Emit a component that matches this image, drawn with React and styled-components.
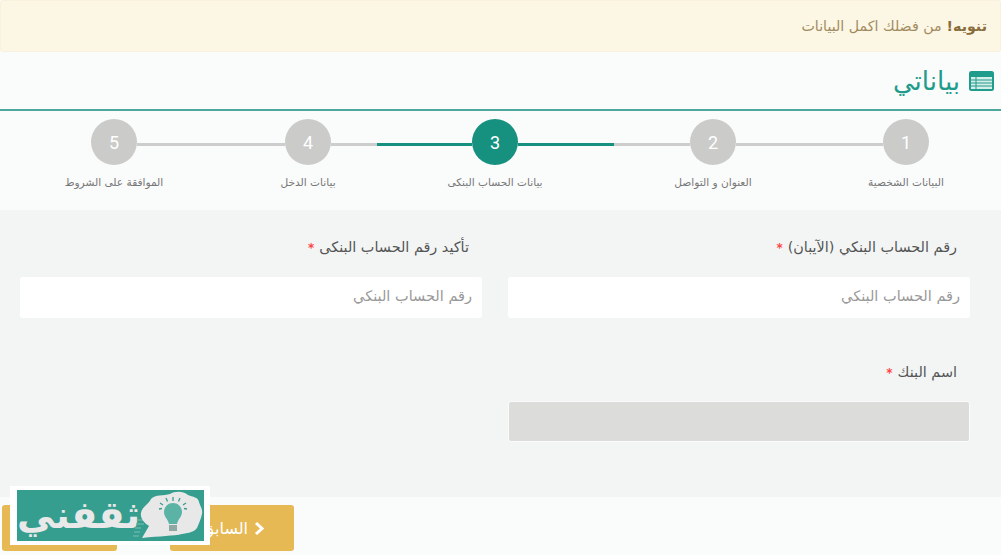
import React from "react"
import styled, { createGlobalStyle } from "styled-components"

const GlobalStyle = createGlobalStyle`
  html, body {
    margin: 0;
    padding: 0;
    background: #fafbfb;
  }
  body {
    font-family: "DejaVu Sans", "Liberation Sans", sans-serif;
  }
`

const Page = styled.div`
  position: relative;
  width: 1001px;
  height: 555px;
  overflow: hidden;
  direction: rtl;
`

const Alert = styled.div`
  box-sizing: border-box;
  height: 52px;
  padding: 0 13px 0 0;
  display: flex;
  align-items: center;
  background: #fbf7e4;
  border: 1px solid #f9f1dc;
  border-radius: 3px;
  color: #a28a5f;
  font-size: 14.2px;

  strong {
    color: #8a6d3b;
    margin-left: 5px;
  }
`

const Header = styled.div`
  box-sizing: border-box;
  height: 59px;
  padding: 0 7px 0 0;
  display: flex;
  align-items: center;
  gap: 9px;
  background: #fafbfb;
  border-bottom: 2px solid #4ea79c;
`

const Title = styled.h1`
  margin: 0;
  font-size: 26px;
  font-weight: normal;
  color: #1f9c8b;
`

const Stepper = styled.div`
  box-sizing: border-box;
  height: 99px;
  padding: 8px 72px 0 0;
  display: grid;
  grid-template-columns: 46px 147px 46px 76px 96px 46px 95px 46px 46px 148px 46px;
  grid-template-rows: 46px auto;
  row-gap: 11px;
  align-content: start;
  background: #fafbfb;
`

const Circle = styled.div`
  grid-row: 1;
  grid-column: ${props => props.$col};
  width: 46px;
  height: 46px;
  border-radius: 50%;
  display: flex;
  align-items: center;
  justify-content: center;
  font-family: Roboto, sans-serif;
  font-size: 18px;
  color: #fff;
  background: ${props => (props.$active ? "#17917f" : "#cbcbca")};
`

const Line = styled.div`
  grid-row: 1;
  grid-column: ${props => props.$col};
  align-self: center;
  height: 3px;
  margin-top: 4px;
  background: ${props => (props.$active ? "#17917f" : "#cdcdcd")};
`

const StepLabel = styled.div`
  grid-row: 2;
  grid-column: ${props => props.$col};
  justify-self: center;
  white-space: nowrap;
  font-size: 10.6px;
  color: #777;
`

const FormArea = styled.div`
  box-sizing: border-box;
  height: 287px;
  padding: 28px 31px 0 19px;
  display: grid;
  grid-template-columns: 462px 462px;
  column-gap: 26px;
  grid-auto-rows: 125px;
  background: #f3f5f5;
`

const Field = styled.div`
  display: flex;
  flex-direction: column;
`

const Label = styled.label`
  box-sizing: border-box;
  height: 39px;
  padding: 1px 13px 0 0;
  font-size: 14.4px;
  color: #555;

  span {
    color: #f44;
    margin-right: 5px;
    font-size: 12px;
    font-weight: bold;
  }
`

const Input = styled.input`
  box-sizing: border-box;
  height: 41px;
  padding: 0 10px 3px;
  border: 0;
  border-radius: 3px;
  background: #fff;
  font-family: inherit;
  font-size: 14.5px;
  direction: rtl;

  &::placeholder {
    color: #999;
    opacity: 1;
  }
`

const Select = styled.div`
  box-sizing: border-box;
  height: 41px;
  margin-top: -1px;
  border: 1px solid #fbfbfb;
  border-radius: 3px;
  background: #dcdcdb;
`

const Footer = styled.div`
  height: 58px;
  padding: 8px 0 0 2px;
  box-sizing: border-box;
  display: flex;
  direction: ltr;
  gap: 53px;
  background: #fafbfb;
`

const Button = styled.div`
  box-sizing: border-box;
  width: ${props => props.$width}px;
  height: 46px;
  padding-right: 30px;
  border-radius: 3px;
  background: #e6b955;
  color: #fff;
  font-size: 16px;
  display: flex;
  direction: rtl;
  align-items: center;
  gap: 6px;
`

const Logo = styled.div`
  position: absolute;
  left: 10px;
  top: 486px;
  box-sizing: border-box;
  width: 200px;
  height: 59px;
  border-style: solid;
  border-color: #fff;
  border-width: 4px 6px 4px 7px;
  background: #369e8f;
  display: flex;
  direction: ltr;
  align-items: center;
`

const LogoText = styled.div`
  width: 123px;
  text-align: center;
  font-family: "DejaVu Sans", sans-serif;
  font-weight: bold;
  font-size: 38px;
  line-height: 51px;
  white-space: nowrap;
  color: #e9e9e9;
  direction: rtl;
`

const ListIcon = () => (
  <svg width="25" height="20" viewBox="0 0 25 20">
    <rect width="25" height="20" rx="2.5" fill="#1f9c8b" />
    <rect x="2" y="6" width="21" height="12" fill="#d5eeea" />
    <path d="M2 9h21M2 12h21M2 15h21M7 6v12" stroke="#1f9c8b" strokeWidth="1" />
  </svg>
)

const ChevronIcon = () => (
  <svg width="10" height="15" viewBox="0 0 10 15">
    <path d="M2 2 L8 7.5 L2 13" fill="none" stroke="#fff" strokeWidth="3" />
  </svg>
)

const BubbleIcon = () => (
  <svg width="64" height="51" viewBox="0 0 64 51" style={{ overflow: "visible" }}>
    <path d="M-3 30h7M-4 34h8M-5 38h6M-6 42h6M-7 46h6" stroke="#62b5a8" strokeWidth="1.5" />
    <path
      d="M2 48 L9 36 C4 33 0 28 1 23 C2 17 8 15 11 9 C15 4 24 6 30 4 C35 1 43 1 48 5 C53 7 58 7 59 12 C60 16 63 19 62 24 C61 29 59 33 57 38 C53 43 47 43 42 44 C34 46 20 46 2 48 Z"
      fill="#e8e8e8"
    />
    <path d="M33 13 C27 13 24 18 24 22 C24 27 28 29 29 34 L37 34 C38 29 42 27 42 22 C42 18 39 13 33 13 Z" fill="#5bb3a5" />
    <rect x="29" y="35" width="8" height="6" fill="#8fa8a3" />
    <path d="M33 7v4M26 8l1.5 3.5M40 8l-1.5 3.5M20 13l3 2M46 13l-3 2M19 19l3-.5M47 19l-3-.5" stroke="#369e8f" strokeWidth="1.3" />
  </svg>
)

const App = () => {
  return (
    <Page>
      <GlobalStyle />
      <Alert>
        <strong>تنويه!</strong> من فضلك اكمل البيانات
      </Alert>

      <Header>
        <ListIcon />
        <Title>بياناتي</Title>
      </Header>

      <Stepper>
        <Circle $col={1}>1</Circle>
        <Line $col={2} />
        <Circle $col={3}>2</Circle>
        <Line $col={4} />
        <Line $col={5} $active />
        <Circle $col={6} $active>3</Circle>
        <Line $col={7} $active />
        <Line $col={8} />
        <Circle $col={9}>4</Circle>
        <Line $col={10} />
        <Circle $col={11}>5</Circle>
        <StepLabel $col={1}>البيانات الشخصية</StepLabel>
        <StepLabel $col={3}>العنوان و التواصل</StepLabel>
        <StepLabel $col={6}>بيانات الحساب البنكى</StepLabel>
        <StepLabel $col={9}>بيانات الدخل</StepLabel>
        <StepLabel $col={11}>الموافقة على الشروط</StepLabel>
      </Stepper>

      <FormArea>
        <Field>
          <Label>رقم الحساب البنكي (الآيبان)<span>*</span></Label>
          <Input placeholder="رقم الحساب البنكي" />
        </Field>
        <Field>
          <Label>تأكيد رقم الحساب البنكى<span>*</span></Label>
          <Input placeholder="رقم الحساب البنكي" />
        </Field>
        <Field>
          <Label>اسم البنك<span>*</span></Label>
          <Select />
        </Field>
      </FormArea>

      <Footer>
        <Button $width={115}>التالي</Button>
        <Button $width={124}>
          <ChevronIcon />
          السابق
        </Button>
      </Footer>

      <Logo>
        <LogoText>ثقفني</LogoText>
        <BubbleIcon />
      </Logo>
    </Page>
  )
}

export default App
